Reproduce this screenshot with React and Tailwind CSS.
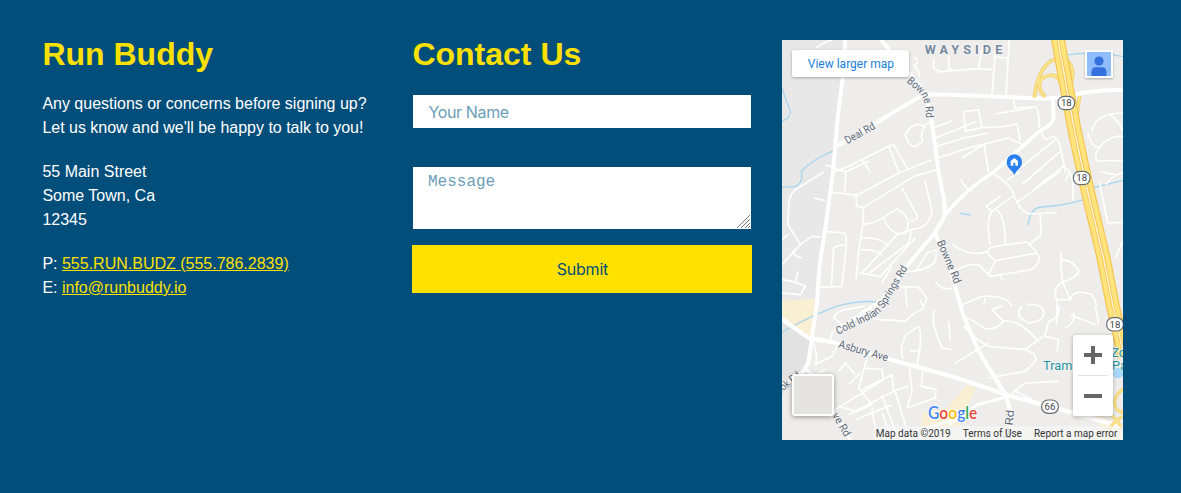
function Label({ x, y, rotate = 0, width, children, size = 33, fill = "#5d6a76", ...rest }) {
  return (
    <text
      transform={`translate(${x} ${y}) rotate(${rotate})`}
      textLength={width}
      lengthAdjust="spacingAndGlyphs"
      fontSize={size}
      fill={fill}
      stroke="#f6f6f6"
      strokeWidth="4"
      strokeLinejoin="round"
      paintOrder="stroke"
      {...rest}
    >
      {children}
    </text>
  );
}

function Shield({ x, y, children }) {
  return (
    <g transform={`translate(${x} ${y})`}>
      <rect x="-25" y="-20" width="50" height="40" rx="19" fill="#fff" stroke="#666c70" strokeWidth="3.5" />
      <text y="10" textAnchor="middle" fontSize="29" fill="#3f4448">{children}</text>
    </g>
  );
}

function MapDrawing() {
  const highway = "M816 0L866 276L904 452L951 650L982 804L1016 960";
  const highwayEast = "M838 0L889 276L927 452L974 650L1004 804L1034 940";
  const ramps = "M757 178C765 110 790 70 822 62C872 68 883 96 862 150M790 176C770 160 765 130 785 118C810 105 835 110 843 155M855 68Q880 90 866 130M893 174C886 210 882 250 884 300";
  return (
    <svg className="block h-full w-full" viewBox="0 6 1023 1200" preserveAspectRatio="none" fontFamily="Roboto, sans-serif">
      <rect width="1023" height="1210" fill="#eeedec" />
      <path d="M0 0H190L160 320L130 570L104 804L88 905L72 1000L0 1015Z" fill="#e8e8e8" />
      <path d="M0 845L90 905L72 1000L0 1070Z" fill="#e2e2e3" />
      <path d="M0 788L104 782L90 900L0 842Z" fill="#f9efd3" />
      <path d="M555 1040L582 1048L530 1165H420V1125L495 1110Z M930 1120L1023 1170V1206H980Z" fill="#f9efd3" />
      <ellipse cx="1008" cy="1005" rx="16" ry="16" fill="#a9dafb" />

      <g fill="none" stroke="#a9d6ee" strokeWidth="4" strokeLinecap="round">
        <path d="M0 150L10 180L26 222L18 240L0 250M155 338Q95 362 58 400Q65 435 40 445L0 448" />
        <path d="M802 66Q850 50 890 46L915 47M990 50L1023 56" />
        <path d="M738 560C745 520 755 510 780 507Q850 503 905 485M932 450L1023 427M535 526L565 531" />
        <path d="M0 882Q70 842 160 806Q230 786 290 792" />
      </g>

      <g fill="none" stroke="#fff" strokeWidth="5" strokeLinejoin="round">
        <path d="M394 60Q410 60 405 76L396 82Q415 100 410 115M455 60V90L475 102L510 98M500 50V90L510 98M103 30Q120 15 150 6" />
        <path d="M510 98L590 92L630 95M590 90L600 30M640 40L630 175M682 6L672 176M635 57L680 60" />
        <path d="M370 290Q382 262 412 259L430 266Q412 285 422 310L400 325Q382 330 370 290ZM430 260L445 253M455 270L510 248M460 300L580 252M465 325L545 300L620 285M468 360L560 330L680 300L725 322M540 360L606 318L620 402M545 220L590 216L600 269L550 280L545 220M600 268Q660 270 705 258L715 310M640 228L760 207Q772 215 772 270" />
        <path d="M158 402L200 385L320 325L335 320L380 398M130 380L190 402M240 365L265 402M320 325L350 402M190 402L260 370M695 178L698 210L760 207" />
        <path d="M930 280Q940 225 1023 225M918 285Q930 335 955 325Q985 290 1023 295M955 325Q930 360 950 370Q990 365 1023 370M983 230Q1010 245 1023 280" />
        <path d="M775 280L790 305L815 295Q832 305 838 340L850 402M700 402L820 305M720 440L835 340M760 450L850 380M855 390Q880 420 872 485" />
        <path d="M145 462L225 472L350 405L450 365M192 402L188 460M222 471L224 505L245 508L395 415L465 395M245 508L242 560L230 640L222 728M242 558Q270 560 310 535L345 512Q380 530 378 560Q377 590 350 588Q320 580 305 540M360 450L405 532Q410 545 385 550M428 425L450 520Q440 570 400 572L345 590L240 705M385 575Q390 600 375 620L262 705M238 600Q285 595 320 622M236 635Q285 635 300 650M230 705L295 715L400 600M400 702L435 645L465 635L460 670Q430 705 350 700M330 685L300 735M345 745L410 748L435 780L425 804M370 750L375 804M460 730Q480 760 510 750" />
        <path d="M125 402L40 455Q20 475 20 500L18 560L55 620L90 595L115 597M55 620L0 680M30 640Q45 660 60 660M18 590L0 605M95 480L130 488M0 725Q40 730 70 745L55 770L0 765M40 730L48 700M130 580L185 585Q195 590 192 630L180 745L115 748M148 743L155 630Q165 620 190 622" />
        <path d="M535 425L558 455M630 405Q690 440 695 470Q715 525 745 528L825 524M675 425L715 402M704 494Q750 460 835 400M695 472L630 520Q610 545 625 620M643 515Q670 535 670 618M775 530L777 590L740 622M630 520L612 505L655 475M510 620Q570 660 620 640L620 632Q640 622 735 612Q765 640 772 660Q770 685 745 695L625 715Q600 690 590 680Q550 675 510 705M610 640L640 668L765 645M640 668L618 713M655 710L660 725M862 403L850 430M955 402L1000 410M970 440Q1000 405 1023 405M952 430L977 555L1023 553M1023 610L1000 660" />
        <path d="M835 640L840 668Q865 660 890 698Q890 715 842 732L835 668M842 732Q810 750 824 785L865 785L842 732M865 785Q875 750 930 770L945 802M825 785V860M530 805L600 775Q670 770 690 804M610 780L605 800" />
        <path d="M145 905Q150 870 180 860L155 840Q160 822 190 815L250 804M255 815Q265 850 320 845L370 850Q395 822 425 812L415 786M365 960Q350 940 370 892L408 866Q420 870 413 935L405 985M385 940L411 937M458 814Q445 850 470 905L480 930L510 935M500 850L505 905M92 905Q110 960 100 980L150 955L165 925M70 995L100 1010L130 995M170 1000L190 975L220 1010M200 1040L235 1005M255 960L230 1050L270 1100L225 1120L170 1105M250 990L300 995L305 1025L160 1115M240 1055L330 1010L335 1060L200 1130M382 985L390 1060L375 1110L460 1080L462 1055L418 1045L423 985M330 1060L380 1045M300 1070L340 1180M340 1060L375 1180M270 1110L280 1175M330 1100L220 1145M300 1125L325 1195" />
        <path d="M545 835Q570 845 605 870Q640 880 665 850L630 815L660 804M545 865Q580 905 620 925L730 935L790 890L800 850Q835 842 830 804M720 805Q705 815 715 840L740 855Q785 850 785 825Q785 795 735 800M660 850Q700 840 750 890L765 905M730 935Q770 950 760 970L730 1000L620 1020M790 895L830 905L825 940M850 870Q880 855 875 825M690 1065L730 1035L830 1030M700 1060L780 1100M520 975L620 915M865 830L940 860M940 804L950 860" />
      </g>

      <g fill="none" stroke="#fff" strokeWidth="12" strokeLinejoin="round">
        <path d="M190 0L182 120L168 230L160 320L153 402L130 570L113 680L104 804L88 910L80 970L65 1000L0 1045" />
        <path d="M165 325L410 178L435 169L510 170L790 182L860 176Q920 154 1023 156" />
        <path d="M293 0L340 60L390 115L430 165L448 240L470 402L485 480Q494 525 480 550L458 585L500 675L525 765L545 835L590 940L670 1070L685 1120L690 1206" />
        <path d="M812 180L815 235Q815 260 775 278L635 402Q550 455 490 530L458 585L390 665L300 785L160 880" strokeWidth="11" />
        <path d="M0 843L80 900L150 912L330 966L510 1015L690 1075L870 1124L1023 1168" strokeWidth="13" />
        <path d="M75 995L130 1070L175 1150L205 1206M500 1162L585 1100L680 1075M430 1170L520 1145" strokeWidth="9" />
      </g>

      <g fill="none" strokeLinejoin="round">
        <path d={ramps} stroke="#f5cd62" strokeWidth="11" />
        <path d={ramps} stroke="#fce58e" strokeWidth="6" />
        <path d={highway} stroke="#f4c350" strokeWidth="20" />
        <path d={highwayEast} stroke="#f4c350" strokeWidth="20" />
        <path d={highway} stroke="#ffe37c" strokeWidth="13" />
        <path d={highwayEast} stroke="#ffe37c" strokeWidth="13" />
        <path d="M827 0L877 276L915 452L962 650L993 804L1025 950" stroke="#fff3cf" strokeWidth="4" />
        <path d="M1023 1052Q985 1085 1005 1115L1023 1125M972 1120Q995 1130 1023 1175M1023 1135Q990 1150 978 1185" stroke="#f5cd62" strokeWidth="9" />
        <path d="M1023 1052Q985 1085 1005 1115L1023 1125M972 1120Q995 1130 1023 1175M1023 1135Q990 1150 978 1185" stroke="#fce58e" strokeWidth="5" />
      </g>

      <Label x={428} y={49} width={233} size={38} fill="#76899f" fontWeight="700" lengthAdjust="spacing">WAYSIDE</Label>
      <defs>
        <path id="bowne-north" d="M373 131L413 166Q431 187 432 237V270" />
        <path id="cold-springs" d="M168 890L270 841Q298 826 318 790L400 652" />
      </defs>
      <text fontSize="33" fill="#5d6a76" stroke="#f6f6f6" strokeWidth="4" paintOrder="stroke">
        <textPath href="#bowne-north" textLength="131" lengthAdjust="spacingAndGlyphs">Bowne Rd</textPath>
      </text>
      <Label x={196} y={319} rotate={-29} width={98}>Deal Rd</Label>
      <Label x={464} y={612} rotate={67} width={138}>Bowne Rd</Label>
      <text fontSize="32" fill="#5d6a76" stroke="#f6f6f6" strokeWidth="4" paintOrder="stroke">
        <textPath href="#cold-springs" textLength="300" lengthAdjust="spacingAndGlyphs">Cold Indian Springs Rd</textPath>
      </text>
      <Label x={168} y={928} rotate={16} width={153}>Asbury Ave</Label>
      <Label x={4} y={1060} rotate={-40} width={70}>ok Rd</Label>
      <Label x={150} y={1132} rotate={60} width={76}>ve Rd</Label>
      <Label x={687} y={1204} rotate={-84} width={88}>le Rd</Label>
      <Label x={783} y={996} size={38} width={88} fill="#27929b">Tram</Label>
      <Label x={988} y={957} size={38} fill="#27929b">Zo</Label>
      <Label x={990} y={996} size={38} fill="#27929b">Pa</Label>
      <Shield x={853} y={195}>18</Shield>
      <Shield x={899} y={420}>18</Shield>
      <Shield x={999} y={859}>18</Shield>
      <Shield x={804} y={1106}>66</Shield>

      <path d="M697 412C693 396 674 392 674 372A23 23 0 0 1 720 372C720 392 701 396 697 412Z" fill="#287ff0" />
      <path d="M697 360L686 369V383H694V374H700V383H708V369Z" fill="#fff" />

      <rect x="275" y="1165" width="748" height="41" fill="#f5f5f5" fillOpacity=".75" />
      <text x="438" y="1142" fontSize="51" fontWeight="600" fontFamily="Lato, sans-serif" textLength="148" lengthAdjust="spacingAndGlyphs" stroke="#fff" strokeWidth="5" paintOrder="stroke">
        <tspan fill="#4285f4">G</tspan><tspan fill="#ea4335">o</tspan><tspan fill="#fbbc05">o</tspan><tspan fill="#4285f4">g</tspan><tspan fill="#34a853">l</tspan><tspan fill="#ea4335">e</tspan>
      </text>
    </svg>
  );
}

function MapPanel() {
  return (
    <div className="relative h-[400px] w-[341px] shrink-0 overflow-hidden font-[Roboto,sans-serif]">
      <MapDrawing />
      <a className="absolute left-[10px] top-[10px] flex h-[27px] w-[117px] items-center justify-center rounded-[2px] bg-white text-[12px] text-[#1a7fdb] shadow-[0_1px_3px_rgba(0,0,0,0.3)]">
        View larger map
      </a>
      <div className="absolute left-[303px] top-[10px] size-[28px] border-2 border-white bg-[#8fbcfb] shadow-[0_1px_2px_rgba(0,0,0,0.3)]">
        <svg className="size-6" viewBox="0 0 24 24" fill="#3470de">
          <circle cx="12" cy="9" r="4.6" />
          <path d="M4.5 24V20Q4.5 15.3 9 15.3H15Q19.5 15.3 19.5 20V24Z" />
        </svg>
      </div>
      <div className="absolute left-[10px] top-[334px] size-[42px] rounded-[3px] border-2 border-white bg-[#e4e3e1] shadow-[0_1px_5px_rgba(0,0,0,0.4)]" />
      <div className="absolute left-[291px] top-[295px] flex h-[81px] w-[40px] flex-col items-center rounded-[2px] bg-white shadow-[0_1px_4px_rgba(0,0,0,0.3)]">
        <svg className="size-10" viewBox="0 0 40 40" stroke="#666" strokeWidth="4">
          <path d="M11 20H29M20 11V29" />
        </svg>
        <div className="h-px w-[30px] bg-[#e3e3e3]" />
        <svg className="size-10" viewBox="0 0 40 40" stroke="#666" strokeWidth="4">
          <path d="M11 20H29" />
        </svg>
      </div>
      <div className="absolute bottom-0 right-[6px] flex h-[13px] items-center gap-[12px] whitespace-nowrap text-[10px] text-[#333]">
        <span>Map data ©2019</span>
        <span>Terms of Use</span>
        <span>Report a map error</span>
      </div>
    </div>
  );
}

export default function App() {
  return (
    <main className="flex h-[493px] w-[1181px] gap-[30px] overflow-hidden bg-[#024e7a] pl-[42.4px] pt-[40px] font-['Liberation_Sans',sans-serif] text-white">
      <section className="w-[340px] shrink-0 text-[16px] leading-[24px]">
        <h2 className="text-[32px] font-bold leading-[28px] text-[#fce100]">Run Buddy</h2>
        <p className="mt-[24px] whitespace-nowrap tracking-[-0.01px]">
          Any questions or concerns before signing up?<br />
          Let us know and we'll be happy to talk to you!
        </p>
        <address className="mt-[20px] not-italic">
          55 Main Street<br />
          Some Town, Ca<br />
          12345
        </address>
        <p className="mt-[20px]">
          P: <a className="text-[#fce100] underline">555.RUN.BUDZ (555.786.2839)</a><br />
          E: <a className="text-[#fce100] underline">info@runbuddy.io</a>
        </p>
      </section>
      <section className="flex w-[340px] shrink-0 flex-col">
        <h2 className="text-[32px] font-bold leading-[28px] text-[#fce100]">Contact Us</h2>
        <input
          className="mx-px mt-[27px] h-[33px] rounded-none bg-white px-[15px] font-[Inter,sans-serif] text-[16px] tracking-[-0.35px] placeholder:text-[#6b9db7]"
          placeholder="Your Name"
        />
        <div className="relative mx-px mt-[39px] h-[62px]">
          <textarea
            className="block h-full w-full resize-none rounded-none bg-white px-[14.6px] py-[5px] font-['Liberation_Mono',monospace] text-[16px] leading-[20px] placeholder:text-[#6b9db7]"
            placeholder="Message"
          />
          <svg className="absolute bottom-px right-px size-[13px]" viewBox="0 0 13 13" stroke="#777" strokeWidth="1">
            <path d="M0 13L13 0M4 13L13 4M8 13L13 8M11 13L13 11" />
          </svg>
        </div>
        <button className="mt-[16px] h-[48px] bg-[#ffe100] font-[Inter,sans-serif] text-[16px] tracking-[-0.2px] text-[#024e7a]">Submit</button>
      </section>
      <MapPanel />
    </main>
  );
}
